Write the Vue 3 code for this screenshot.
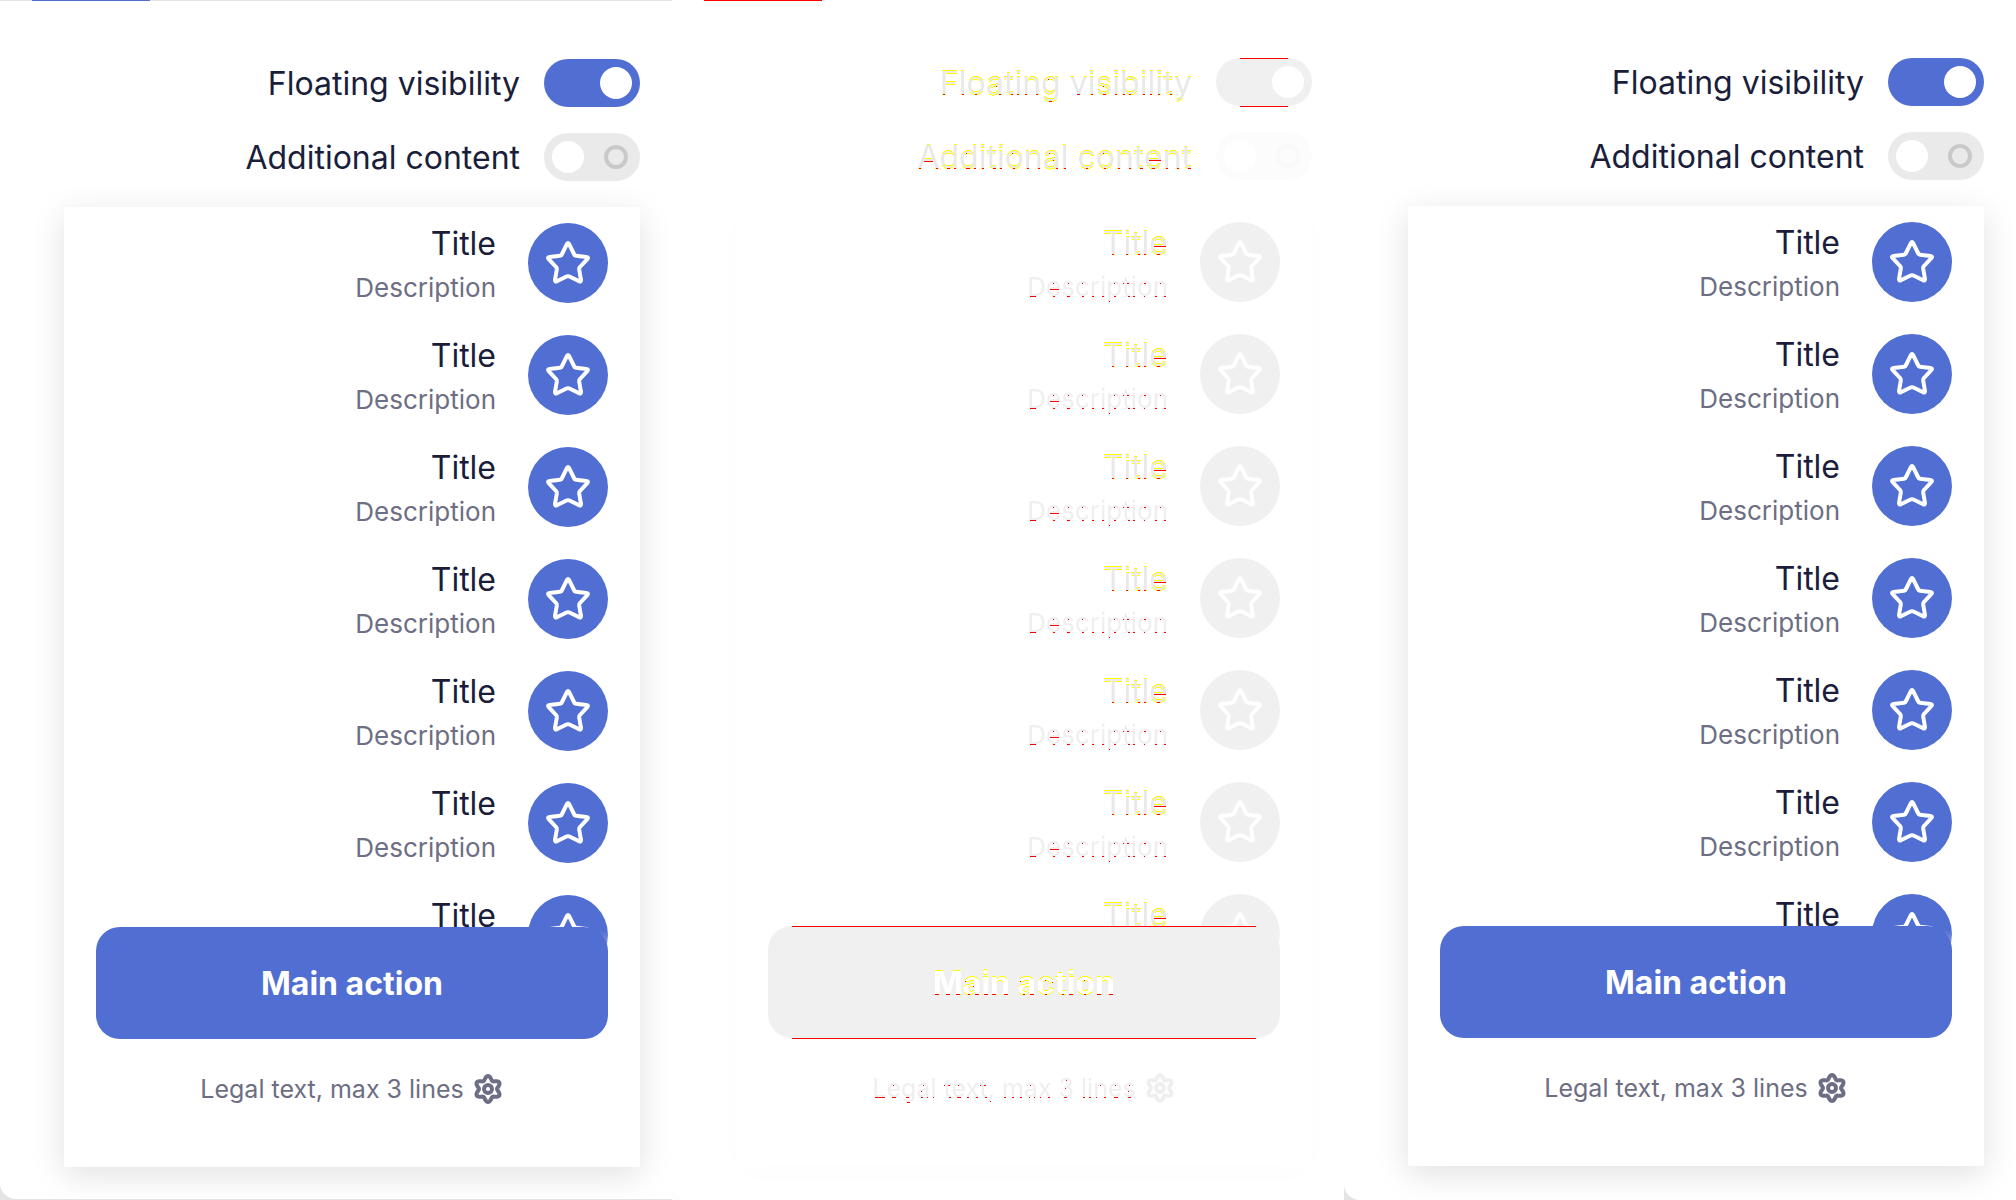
<script setup>
const panels = [
  { id: 'before', kind: 'framed' },
  { id: 'changes', kind: 'diff' },
  { id: 'after', kind: 'plain' },
]
const rows = [
  { title: 'Title', description: 'Description' },
  { title: 'Title', description: 'Description' },
  { title: 'Title', description: 'Description' },
  { title: 'Title', description: 'Description' },
  { title: 'Title', description: 'Description' },
  { title: 'Title', description: 'Description' },
  { title: 'Title' },
]

// Six-lobed outline of the settings icon, centred on the origin
const gear = Array.from({ length: 72 }, (_, i) => {
  const a = (i * Math.PI) / 36
  const r = 11 - 2 * Math.cos(6 * a)
  return `${(r * Math.cos(a)).toFixed(2)},${(r * Math.sin(a)).toFixed(2)}`
}).join(' ')
</script>

<template>
  <main class="board">
    <section v-for="p in panels" :key="p.id" class="panel" :class="p.kind">
      <div class="sheet">
        <div v-if="p.kind !== 'plain'" class="marker"></div>
        <label class="option">
          <span class="ink">Floating visibility</span>
          <input type="checkbox" class="switch" checked />
        </label>
        <label class="option">
          <span class="ink">Additional content</span>
          <input type="checkbox" class="switch" />
        </label>

        <div class="card">
          <ul class="list">
            <li v-for="(row, i) in rows" :key="i" class="row">
              <div class="texts">
                <div class="title ink">{{ row.title }}</div>
                <div v-if="row.description" class="description soft-ink">{{ row.description }}</div>
              </div>
              <div class="avatar">
                <svg viewBox="-24 -24 48 48" width="48" height="48" aria-hidden="true">
                  <path
                    d="M-1 -19.2Q0 -20.8 1 -19.2L6 -9Q6.500 -7.500 8 -7.300L18.500 -6Q21 -5.500 19.300 -3.800L12 4Q11 5 11.200 6.500L13 17Q13 19 11.200 18.300L1.500 13.500Q0 12.800 -1.500 13.500L-11.200 18.300Q-13 19 -13 17L-11.200 6.500Q-11 5 -12 4L-19.300 -3.800Q-21 -5.500 -18.500 -6L-8 -7.300Q-6.500 -7.500 -6 -9Z"
                    fill="none"
                    stroke="#fff"
                    stroke-width="4"
                    stroke-linejoin="round"
                  />
                </svg>
              </div>
            </li>
          </ul>
          <footer class="footer">
            <button type="button" class="action"><span class="action-text">Main action</span></button>
            <p class="legal">
              <span class="soft-ink">Legal text, max 3 lines</span>
              <svg viewBox="-16 -16 32 32" width="32" height="32" aria-hidden="true">
                <g fill="none" stroke="currentColor" stroke-width="4">
                  <polygon :points="gear" stroke-linejoin="round" />
                  <circle r="4" />
                </g>
              </svg>
            </p>
          </footer>
        </div>
      </div>
    </section>

    <!-- Marks the rows where a shape and its copy one pixel lower disagree -->
    <svg class="defs" width="0" height="0" aria-hidden="true">
      <filter id="shift-marks" x="0" y="0" width="100%" height="100%" color-interpolation-filters="sRGB">
        <feOffset in="SourceAlpha" dy="1" result="lower" />
        <feComposite in="SourceAlpha" in2="lower" operator="arithmetic" k2="1" k3="-1" result="top" />
        <feComposite in="lower" in2="SourceAlpha" operator="arithmetic" k2="1" k3="-1" result="bottom" />
        <feMerge result="edges">
          <feMergeNode in="top" />
          <feMergeNode in="bottom" />
        </feMerge>
        <feComponentTransfer in="edges" result="soft">
          <feFuncA type="discrete" tableValues="0 0 0 0 0 1 1 1 1 1" />
        </feComponentTransfer>
        <feComponentTransfer in="bottom" result="hard">
          <feFuncA type="discrete" tableValues="0 0 0 0 0 0 0 0 0 1" />
        </feComponentTransfer>
        <feFlood flood-color="#ffff00" />
        <feComposite in2="soft" operator="in" result="yellow" />
        <feFlood flood-color="#ff0000" />
        <feComposite in2="hard" operator="in" result="red" />
        <feMerge>
          <feMergeNode in="SourceGraphic" />
          <feMergeNode in="yellow" />
          <feMergeNode in="red" />
        </feMerge>
      </filter>
      <filter id="base-marks" x="0" y="0" width="100%" height="100%" color-interpolation-filters="sRGB">
        <feOffset in="SourceAlpha" dy="1" result="lower" />
        <feComposite in="lower" in2="SourceAlpha" operator="arithmetic" k2="1" k3="-1" result="bottom" />
        <feComponentTransfer in="bottom" result="hard">
          <feFuncA type="discrete" tableValues="0 0 0 0 0 0 0 0 0 1" />
        </feComponentTransfer>
        <feFlood flood-color="#ff0000" />
        <feComposite in2="hard" operator="in" result="red" />
        <feMerge>
          <feMergeNode in="SourceGraphic" />
          <feMergeNode in="red" />
        </feMerge>
      </filter>
    </svg>
  </main>
</template>

<style>
body {
  margin: 0;
  background: #fff;
}
</style>

<style scoped>
.board {
  display: grid;
  grid-template-columns: repeat(3, 1fr);
  height: 100vh;
  min-height: 800px;
  overflow: hidden;
  font-family: Inter, "Open Sans", sans-serif;
}

.panel {
  --accent: #516ed3;
  --text: #1a1e3b;
  --muted: #6d6e83;
  --track: #eaeaea;
  --ring: #c9c9c9;
  --shade: rgba(0, 0, 0, 0.12);
  display: flex;
  min-width: 0;
  overflow: hidden;
  background: #e4e4e4;
}

.framed {
  box-sizing: border-box;
  overflow: visible;
  border-top: 1px solid #e4e4e4;
  border-bottom: 1px solid #e4e4e4;
}

.diff {
  --accent: #f0f0f0;
  --text: #e9e9e9;
  --muted: #efefef;
  --track: #fcfcfc;
  --ring: #f9f9f9;
  --shade: rgba(0, 0, 0, 0.012);
  background: #fcfcfc;
}

.sheet {
  position: relative;
  display: flex;
  flex: 1;
  flex-direction: column;
  gap: 26px;
  min-width: 0;
  padding: 58px 32px 34px 64px;
  background: #fff;
  border-bottom-left-radius: 16px;
}

.framed .sheet {
  padding-bottom: 32px;
}

.marker {
  position: absolute;
  top: 0;
  left: 32px;
  width: 118px;
  height: 1px;
  background: #f00;
}

.framed .marker {
  top: -1px;
  background: var(--accent);
}

.option {
  display: flex;
  align-items: center;
  justify-content: flex-end;
  gap: 24px;
  height: 48px;
  color: var(--text);
  font-size: 32px;
  line-height: 48px;
}

.option .ink,
.texts,
.action-text {
  padding-top: 2px;
}

.switch {
  position: relative;
  flex: none;
  width: 96px;
  height: 48px;
  margin: 0;
  appearance: none;
  background: var(--track);
  border-radius: 24px;
}

.switch::before {
  position: absolute;
  top: 8px;
  left: 8px;
  width: 32px;
  height: 32px;
  background: #fff;
  border-radius: 50%;
  content: "";
}

.switch::after {
  position: absolute;
  top: 12px;
  right: 12px;
  box-sizing: border-box;
  width: 24px;
  height: 24px;
  border: 4px solid var(--ring);
  border-radius: 50%;
  content: "";
}

.switch:checked {
  background: var(--accent);
}

.switch:checked::before {
  left: 56px;
}

.switch:checked::after {
  display: none;
}

.card {
  position: relative;
  flex: 1;
  min-height: 0;
  background: #fff;
  box-shadow: 0 8px 32px var(--shade);
}

.list {
  height: calc(100% - 208px);
  margin: 0;
  padding: 0;
  overflow: hidden;
  list-style: none;
}

.row {
  display: flex;
  align-items: center;
  justify-content: flex-end;
  gap: 32px;
  height: 112px;
  padding: 0 32px;
}

.texts {
  min-height: 88px;
  text-align: right;
}

.title {
  color: var(--text);
  font-size: 32px;
  line-height: 48px;
}

.description {
  color: var(--muted);
  font-size: 26px;
  line-height: 40px;
}

.avatar {
  display: flex;
  align-items: center;
  justify-content: center;
  width: 80px;
  height: 80px;
  background: var(--accent);
  border-radius: 50%;
}

.footer {
  position: absolute;
  right: 0;
  bottom: 0;
  left: 0;
  padding: 0 32px 58px;
  background: linear-gradient(rgba(255, 255, 255, 0) 4px, #fff 48px);
}

.action {
  position: relative;
  display: block;
  width: 100%;
  height: 112px;
  padding: 0;
  color: #fff;
  font: 700 32px/48px Inter, "Open Sans", sans-serif;
  background: var(--accent);
  border: 0;
  border-radius: 24px;
}

.action-text {
  display: inline-block;
}

.legal {
  display: flex;
  align-items: center;
  justify-content: center;
  gap: 8px;
  height: 40px;
  margin: 30px 0 0;
  color: var(--muted);
  font-size: 25px;
  line-height: 40px;
}

.diff .ink,
.diff .action-text {
  filter: url(#shift-marks);
}

.diff .soft-ink {
  filter: url(#base-marks);
}

.diff .action::after,
.diff .switch:checked::after {
  position: absolute;
  display: block;
  top: 0;
  right: 24px;
  bottom: -1px;
  left: 24px;
  width: auto;
  height: auto;
  border: solid #f00;
  border-width: 1px 0;
  border-radius: 0;
  content: "";
}

.defs {
  position: absolute;
}
</style>
